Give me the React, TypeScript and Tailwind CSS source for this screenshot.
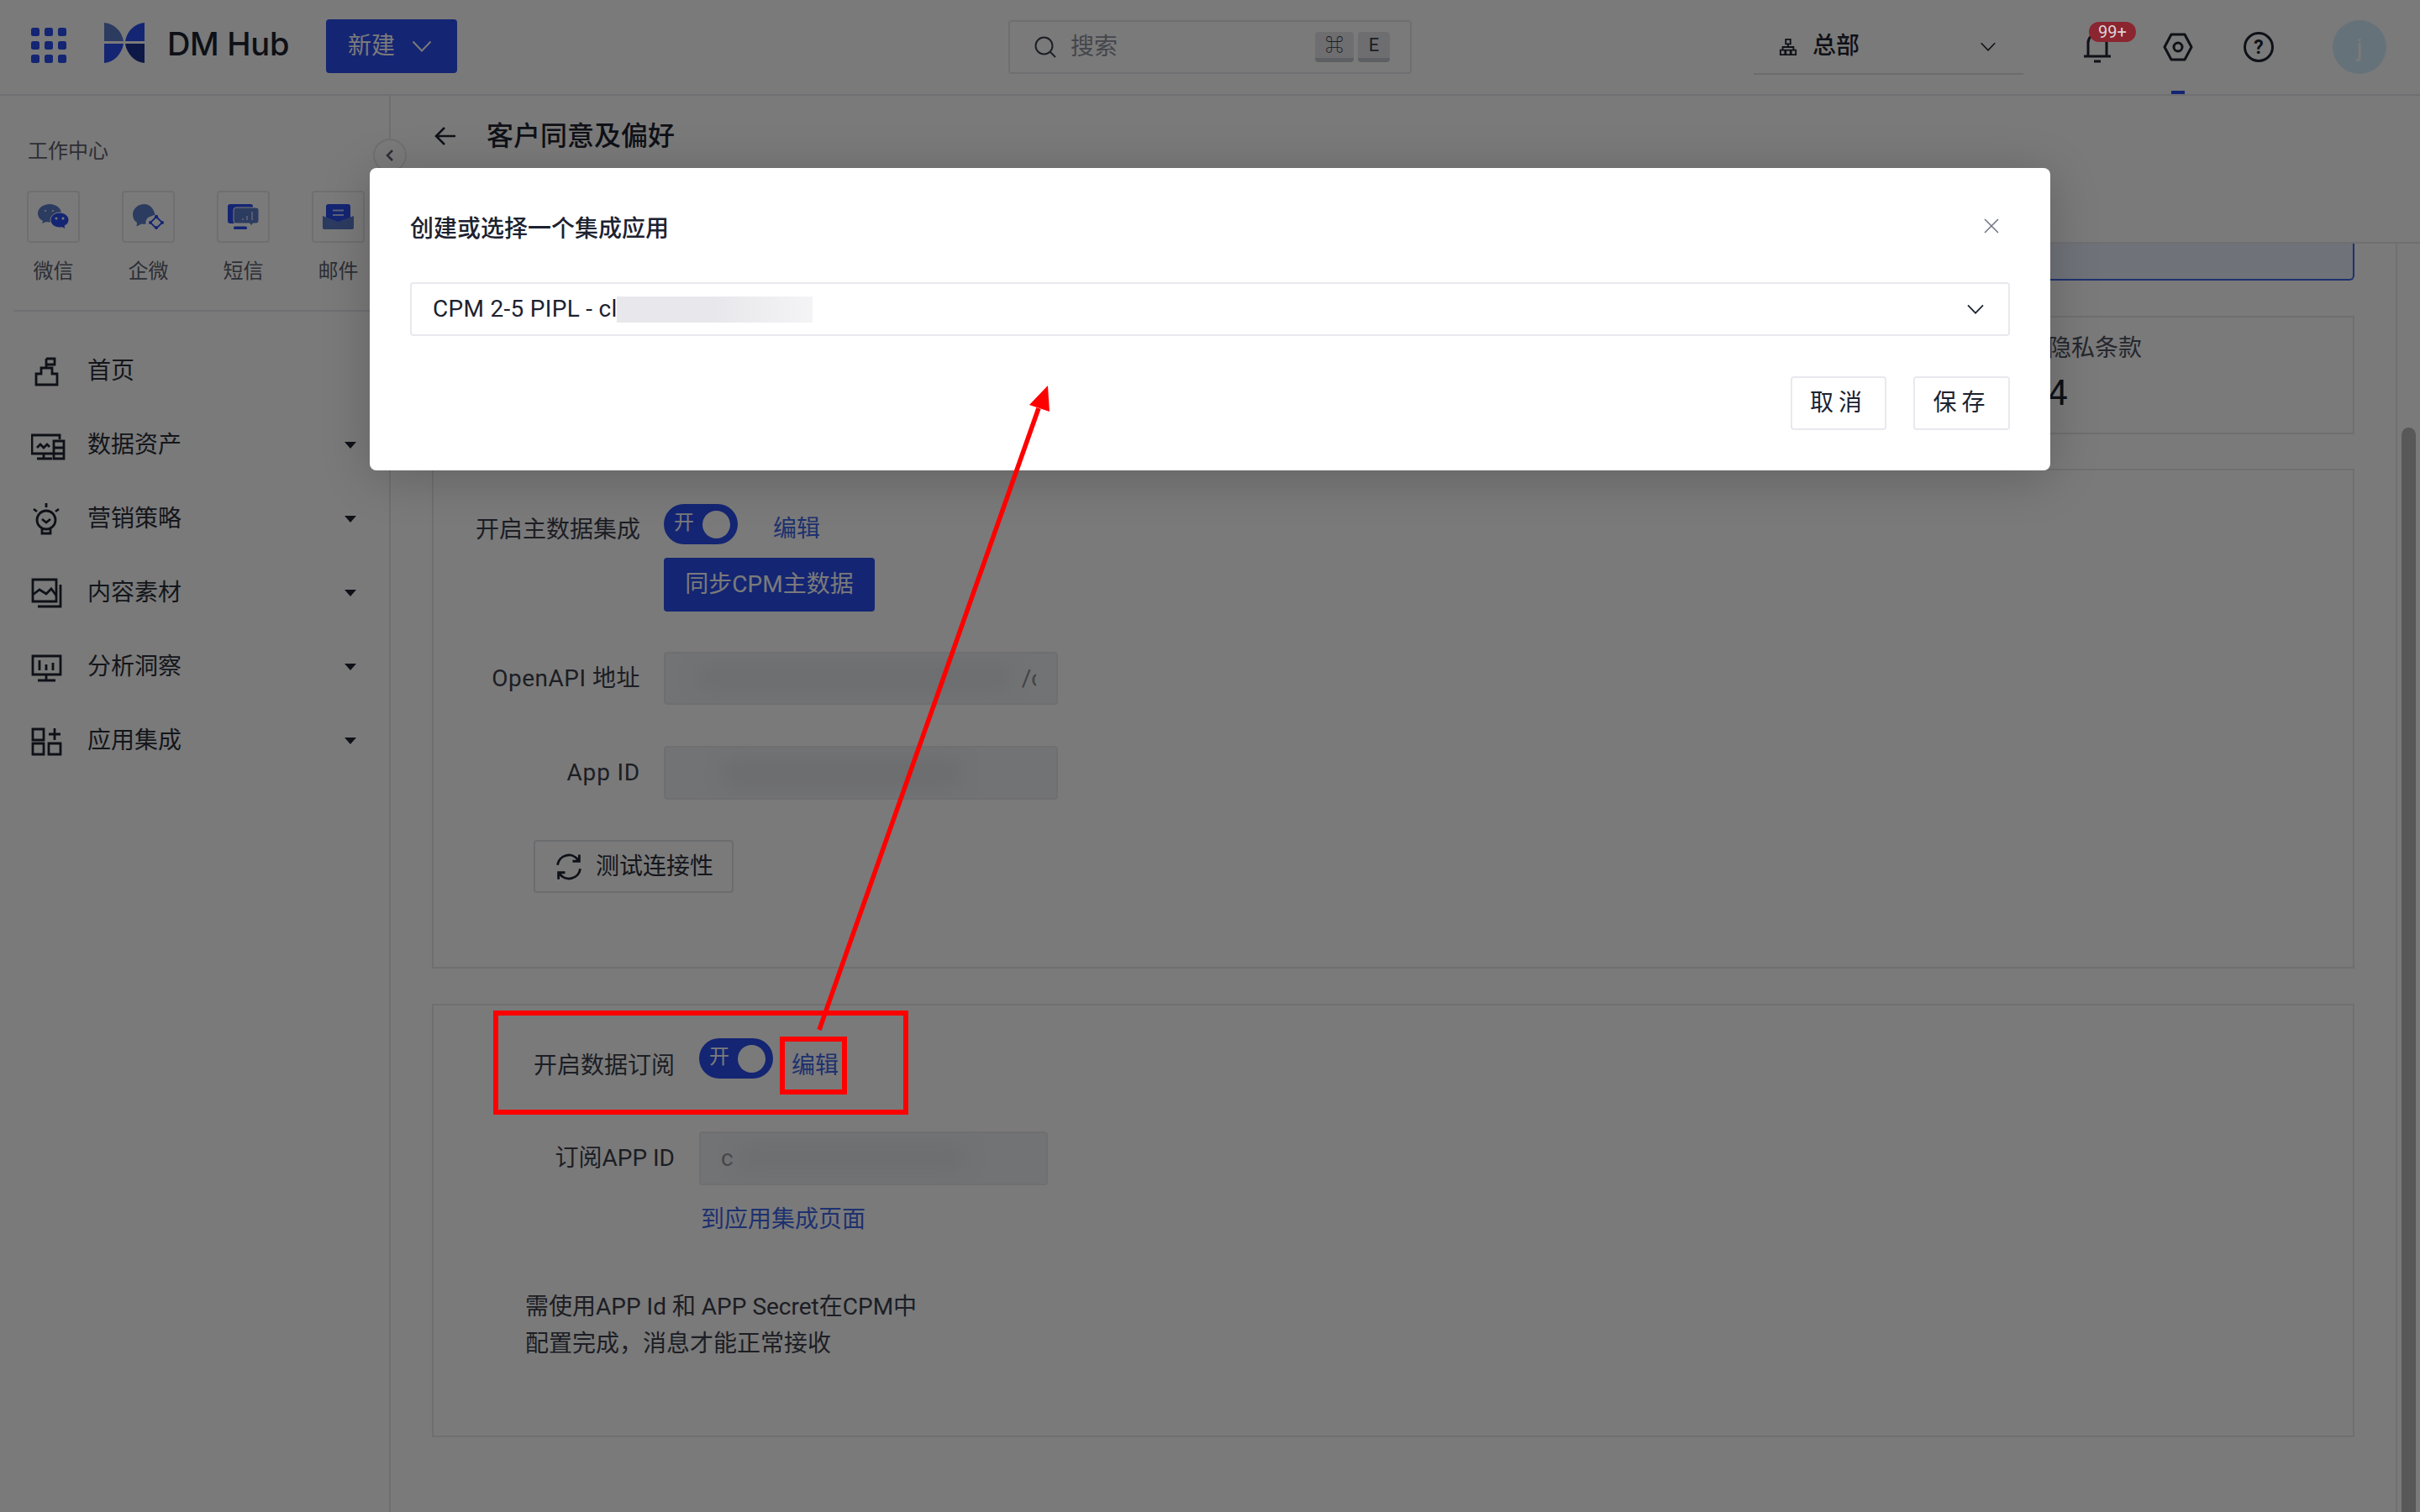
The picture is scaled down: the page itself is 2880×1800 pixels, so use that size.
import React from "react";

const font = "font-['Roboto','Noto_Sans_CJK_SC',sans-serif]";

function Chevron({ className = "" }: { className?: string }) {
  return (
    <svg viewBox="0 0 24 14" fill="none" stroke="currentColor" strokeWidth="2" className={className}>
      <path d="M1.5 1.5 12 12.5 22.5 1.5" />
    </svg>
  );
}

function Logo() {
  return (
    <svg viewBox="0 0 48 48" className="w-[48px] h-[48px]">
      <path d="M0 0C12 1 21 10 23 22H0Z" fill="#5c7cc8" />
      <path d="M48 0C36 1 27 10 25 22H48Z" fill="#2b4ef0" />
      <path d="M0 25H23C21 37 12 47 0 48Z" fill="#2b4ef0" />
      <path d="M48 25H25C27 37 36 47 48 48Z" fill="#1c3394" />
    </svg>
  );
}

function Grid() {
  return (
    <div className="grid grid-cols-3 gap-[6px] w-[42px]">
      {Array.from({ length: 9 }).map((_, i) => (
        <div key={i} className="h-[10px] rounded-[2.5px] bg-[#2b4ef0]" />
      ))}
    </div>
  );
}

const tileIcon = "w-[37px] h-[30px] overflow-visible";

function WeChat() {
  return (
    <svg viewBox="0 0 37 30" className={tileIcon}>
      <path d="M14 0C6 0 0 5 0 11c0 4 2 7 6 9l-1 3 5-2c1 .3 2 .4 4 .4 6 0 14-4 14-10.400C28 5 22 0 14 0Z" fill="#5c7cc8" />
      <path d="M26 10c-6 0-11 4-11 9s5 9 11 9c1 0 2 0 3-.3l4 2.300-1-4c3-2 5-4 5-7 0-5-5-9-11-9Z" fill="#2b4ef0" stroke="#fff" strokeWidth="1" />
      <circle cx="9" cy="8" r="1.300" fill="#fff" fillOpacity=".6" />
      <circle cx="18" cy="8" r="1.300" fill="#fff" fillOpacity=".6" />
      <circle cx="22" cy="17" r="1.500" fill="#fff" />
      <circle cx="30" cy="17" r="1.500" fill="#fff" />
    </svg>
  );
}

function WeCom() {
  return (
    <svg viewBox="0 0 37 30" className={tileIcon}>
      <path d="M14 0C6 0 0 5.500 0 12.500c0 4.500 2 7.500 5 9.500l-.5 4.500 6-3c1.500.4 3 .5 5 .3-.5-3 .5-6 3-8l8-3.300C25 5 20 0 14 0Z" fill="#5c7cc8" />
      <path d="M28 15l7 7-7 7-7-7Z" fill="none" stroke="#2b4ef0" strokeWidth="1.800" />
      <circle cx="28" cy="15" r="2.200" fill="#2b4ef0" />
      <circle cx="35" cy="22" r="2" fill="#2b4ef0" />
      <circle cx="28" cy="28" r="2" fill="#2b4ef0" />
      <circle cx="21" cy="22" r="2" fill="#2b4ef0" />
    </svg>
  );
}

function Sms() {
  return (
    <svg viewBox="0 0 37 30" className={tileIcon}>
      <path d="M3 0h24a3 3 0 0 1 3 3v20H3a3 3 0 0 1-3-3V3a3 3 0 0 1 3-3Z" fill="#2b4ef0" />
      <path d="M10 4h24a3 3 0 0 1 3 3v13a3 3 0 0 1-3 3h-4l-2 3-2-3H10a3 3 0 0 1-3-3V7a3 3 0 0 1 3-3Z" fill="#5c7cc8" stroke="#fff" strokeWidth="1" />
      <rect x="7" y="26.500" width="16" height="3.500" rx="1.500" fill="#2b4ef0" />
      <path d="M18 19v-2M23 19v-5M29 19V9" stroke="#fff" strokeOpacity=".7" strokeWidth="1.500" />
    </svg>
  );
}

function Mail() {
  return (
    <svg viewBox="0 0 37 30" className={tileIcon}>
      <path d="M7 0h23a3 3 0 0 1 3 3v14l-14.500 6L4 17V3a3 3 0 0 1 3-3Z" fill="#2b4ef0" />
      <path d="M12 7.500h13M12 13h13" stroke="#fff" strokeOpacity=".7" strokeWidth="1.800" />
      <path d="M0 14l18.500 7L37 14v14a2 2 0 0 1-2 2H2a2 2 0 0 1-2-2Z" fill="#5c7cc8" />
    </svg>
  );
}

const ic = "w-[44px] h-[44px] fill-none stroke-[#1f2430] stroke-[2.8]";

const navIcons: Record<string, React.ReactNode> = {
  首页: (
    <svg viewBox="0 0 44 44" className={ic}>
      <path d="M18 8h10v7H18M18 8v11h-6v7H6v13h25V26h-6v-7h-7" />
    </svg>
  ),
  数据资产: (
    <svg viewBox="0 0 44 44" className={ic}>
      <path d="M27 33H1V11h33v5" />
      <path d="M7 26l4-4 4 4 4-4 3 3M7 39h18M15 33v6" />
      <path d="M27 18h12v21H27zM27 26h12M27 33h12" />
    </svg>
  ),
  营销策略: (
    <svg viewBox="0 0 44 44" className={ic}>
      <circle cx="18" cy="24" r="11" />
      <path d="M18 4v5M3 11l4 3M33 11l-4 3M13 34v6h10v-6M13 23l5 4 5-4" />
    </svg>
  ),
  内容素材: (
    <svg viewBox="0 0 44 44" className={ic}>
      <path d="M2 7h28v26H2zM8 39h27V13" />
      <path d="M2 25l8-6 8 5 6-6 6 8" />
    </svg>
  ),
  分析洞察: (
    <svg viewBox="0 0 44 44" className={ic}>
      <path d="M2 10h33v22H2zM18 32v7M8 39h21M10 15v12M18 20v7M26 18v9" />
    </svg>
  ),
  应用集成: (
    <svg viewBox="0 0 44 44" className={ic}>
      <path d="M2 9h13v13H2zM2 26h13v13H2zM21 26h14v13H21zM21 15h14M28 8v14" />
    </svg>
  ),
};

function Toggle() {
  return (
    <div className="w-[88px] h-[48px] rounded-full bg-[#2b4ef0] flex items-center pl-[12px] pr-[9px] shrink-0">
      <span className="text-[24px] leading-[32px] text-white -mt-[4px]">开</span>
      <span className="ml-auto w-[33px] h-[33px] rounded-full bg-white" />
    </div>
  );
}

function Soft({ className }: { className: string }) {
  return <span className={"absolute blur-[12px] " + className} />;
}

export default function App() {
  const nav = ["首页", "数据资产", "营销策略", "内容素材", "分析洞察", "应用集成"];
  const tiles = [
    { n: "微信", i: <WeChat /> },
    { n: "企微", i: <WeCom /> },
    { n: "短信", i: <Sms /> },
    { n: "邮件", i: <Mail /> },
  ];
  return (
    <div className={"relative w-[2880px] h-[1800px] overflow-hidden bg-white text-[#1f2430] " + font}>
      {/* header */}
      <header className="h-[114px] border-b-2 border-[#e8e9ee] flex items-start relative">
        <div className="ml-[37px] mt-[33px]"><Grid /></div>
        <div className="ml-[45px] mt-[27px]"><Logo /></div>
        <div className="ml-[27px] mt-[27px] text-[38px] leading-[50px] font-medium font-['Inter',sans-serif] tracking-[-0.3px] text-[#1c2230]">DM Hub</div>
        <button className="absolute left-[388px] top-[23px] w-[156px] h-[64px] rounded-[4px] bg-[#2b4ef0] text-white flex items-center pl-[26px] text-[28px]">
          新建
          <Chevron className="w-[24px] h-[14px] ml-[20px]" />
        </button>
        <div className="absolute left-[1200px] top-[24px] w-[480px] h-[64px] border-2 border-[#e8e9ee] rounded-[4px] flex items-center pl-[28px]">
          <svg viewBox="0 0 28 28" className="w-[28px] h-[28px] fill-none stroke-[#3c4150] stroke-2">
            <circle cx="12.500" cy="12.500" r="10" /><path d="M20 20l6 6" />
          </svg>
          <span className="ml-[16px] text-[28px] text-[#8f92a0]">搜索</span>
          <span className="ml-auto flex gap-[5px] mr-[24px]">
            <span className="w-[46px] h-[36px] rounded-[4px] bg-[#e5e6ea] border-b-[5px] border-[#c4c6cd] flex items-center justify-center text-[22px] leading-none text-[#3c4150]">⌘</span>
            <span className="w-[38px] h-[36px] rounded-[4px] bg-[#e5e6ea] border-b-[5px] border-[#c4c6cd] flex items-center justify-center text-[22px] leading-none text-[#3c4150]">E</span>
          </span>
        </div>
        <div className="absolute left-[2087px] top-[24px] w-[321px] h-[65px] border-b-2 border-[#e0e1e6] flex items-center pl-[30px]">
          <svg viewBox="0 0 24 24" className="w-[22px] h-[22px] fill-none stroke-[#1f2430] stroke-2">
            <path d="M9 2h6v6H9zM2 16h6v6H2zM9 16h6v6H9zM16 16h6v6h-6zM12 8v4M5 16v-4h14v4" />
          </svg>
          <span className="ml-[18px] -mt-[2px] text-[28px] font-medium">总部</span>
          <Chevron className="w-[20px] h-[11px] ml-auto mr-[32px]" />
        </div>
        <svg viewBox="0 0 36 40" className="absolute left-[2478px] top-[36px] w-[36px] h-[40px] fill-none stroke-[#1f2430] stroke-[3]">
          <path d="M2 31h32M7 31V15a11 11 0 0 1 22 0v16M14 37h8" />
        </svg>
        <svg viewBox="0 0 36 34" className="absolute left-[2574px] top-[39px] w-[36px] h-[34px] fill-none stroke-[#1f2430] stroke-[3] [stroke-linejoin:round]">
          <path d="M10 2h16l8 15-8 15H10L2 17Z" /><circle cx="18" cy="17" r="5" />
        </svg>
        <div className="absolute left-[2584px] top-[108px] w-[16px] h-[4px] bg-[#2b4ef0]" />
        <div className="absolute left-[2670px] top-[38px] w-[36px] h-[36px] rounded-full border-[3px] border-[#1f2430] flex items-center justify-center text-[23px] font-bold leading-none">?</div>
        <div className="absolute left-[2776px] top-[24px] w-[64px] h-[64px] rounded-full bg-[#d5eeff] flex items-center justify-center text-[30px] text-white">j</div>
      </header>

      <div className="flex h-[1686px]">
        {/* sidebar */}
        <aside className="w-[465px] shrink-0 border-r-2 border-[#e8e9ee] relative">
          <div className="pl-[33px] pt-[50px] text-[24px] leading-[32px] text-[#5e6270]">工作中心</div>
          <div className="flex gap-[50px] ml-[32px] mt-[31px]">
            {tiles.map((t) => (
              <div key={t.n} className="w-[63px] flex flex-col items-center">
                <div className="w-[63px] h-[62px] border-2 border-[#e8e9ee] rounded-[4px] flex items-center justify-center">{t.i}</div>
                <div className="mt-[18px] text-[24px] leading-[32px] text-[#5e6270] whitespace-nowrap">{t.n}</div>
              </div>
            ))}
          </div>
          <div className="mx-[16px] mt-[30px] h-[2px] bg-[#e8e9ee]" />
          <nav className="mt-[26px]">
            {nav.map((n) => (
              <div key={n} className="h-[88px] flex items-center pl-[37px] pr-[39px]">
                <span className="w-[67px] shrink-0">{navIcons[n]}</span>
                <span className="mt-[2px] text-[28px] leading-[36px] text-[#2b2f3a]">{n}</span>
                {n !== "首页" && (
                  <svg viewBox="0 0 14 8" className="w-[14px] h-[8px] mt-[2px] ml-auto fill-[#1f2430]"><path d="M0 0h14L7 8Z" /></svg>
                )}
              </div>
            ))}
          </nav>
          <div className="absolute -right-[21px] top-[51px] w-[40px] h-[40px] rounded-full border-2 border-[#e8e9ee] bg-white flex items-center justify-center">
            <svg viewBox="0 0 10 16" className="w-[10px] h-[16px] fill-none stroke-[#5e6270] stroke-[2.5]"><path d="M8 2 2 8l6 6" /></svg>
          </div>
        </aside>

        {/* main */}
        <main className="flex-1 min-w-0 flex flex-col">
          <div className="h-[176px] shrink-0 border-b-2 border-[#e8e9ee] pl-[52px] pt-[30px] flex items-start">
            <svg viewBox="0 0 26 24" className="w-[26px] h-[24px] mt-[6px] fill-none stroke-[#1f2430] stroke-[2.5]"><path d="M25 12H2M12 2 2 12l10 10" /></svg>
            <span className="ml-[36px] text-[32px] leading-[36px] font-medium text-[#1f2430]">客户同意及偏好</span>
          </div>
          <div className="flex flex-1 min-h-0">
            <div className="flex-1 min-w-0 pl-[49px] pr-[49px]">
              <div className="h-[44px] border-2 border-t-0 border-[#3f67e8] rounded-b-[6px] bg-[#e8eefb]" />
              <div className="mt-[42px] h-[141px] border-2 border-[#e8e9ee] pl-[1921px] pt-[19px]">
                <div className="text-[28px] leading-[36px] text-[#4e5260]">隐私条款</div>
                <div className="text-[42px] leading-[50px] mt-[10px] text-[#1f2430]">4</div>
              </div>

              <section className="mt-[41px] h-[595px] border-2 border-[#e8e9ee] pt-[40px]">
                <div className="flex items-start">
                  <div className="w-[246px] mt-[13px] text-right text-[28px] leading-[36px] text-[#3c404c]">开启主数据集成</div>
                  <div className="ml-[28px]">
                    <div className="flex items-start">
                      <Toggle />
                      <a className="ml-[42px] mt-[12px] text-[28px] leading-[36px] text-[#3f67e8]">编辑</a>
                    </div>
                    <button className="mt-[16px] w-[251px] h-[64px] rounded-[4px] bg-[#2b4ef0] text-white text-[28px] leading-[36px]">同步CPM主数据</button>
                  </div>
                </div>
                <div className="flex items-center mt-[48px]">
                  <div className="w-[246px] text-right text-[28px] leading-[36px] tracking-[0.5px] text-[#3c404c]">OpenAPI 地址</div>
                  <div className="ml-[28px] relative w-[469px] h-[63px] rounded-[4px] bg-[#eef0f3] border-2 border-[#e8e9ee] overflow-hidden flex items-center justify-end pr-[15px] text-[28px] text-[#8a8d99]">
                    <Soft className="left-[40px] top-[14px] w-[370px] h-[30px] bg-[#e3e5e9]" />
                    <span className="relative">/c</span>
                    <span className="absolute right-[10px] top-[12px] w-[14px] h-[36px] bg-[#eef0f3]" />
                  </div>
                </div>
                <div className="flex items-center mt-[49px]">
                  <div className="w-[246px] text-right text-[28px] leading-[36px] tracking-[0.8px] text-[#3c404c]">App ID</div>
                  <div className="ml-[28px] relative w-[469px] h-[64px] rounded-[4px] bg-[#eef0f3] border-2 border-[#e8e9ee] overflow-hidden">
                    <Soft className="left-[70px] top-[16px] w-[280px] h-[30px] bg-[#e0e2e6]" />
                  </div>
                </div>
                <button className="ml-[119px] mt-[48px] w-[238px] h-[63px] rounded-[4px] border-2 border-[#e0e1e6] flex items-center pl-[22px] text-[28px] text-[#2b2f3a]">
                  <svg viewBox="0 0 32 32" className="w-[36px] h-[36px] fill-none stroke-[#1f2430] stroke-[2.5]">
                    <path d="M4 14A12 12 0 0 1 26 9M28 18A12 12 0 0 1 6 23M27 3v7h-7M5 29v-7h7" />
                  </svg>
                  <span className="ml-[14px]">测试连接性</span>
                </button>
              </section>

              <section className="mt-[42px] h-[516px] border-2 border-[#e8e9ee] pt-[39px]">
                <div className="flex items-start">
                  <div className="w-[287px] mt-[15px] text-right text-[28px] leading-[36px] text-[#3c404c]">开启数据订阅</div>
                  <div className="ml-[29px]"><Toggle /></div>
                  <a className="ml-[22px] mt-[15px] text-[28px] leading-[36px] text-[#3f67e8]">编辑</a>
                </div>
                <div className="flex items-center mt-[60px]">
                  <div className="w-[287px] text-right text-[28px] leading-[36px] text-[#3c404c]">订阅APP ID</div>
                  <div className="ml-[29px] relative w-[415px] h-[64px] rounded-[4px] bg-[#eef0f3] border-2 border-[#e8e9ee] overflow-hidden flex items-center pl-[24px] text-[28px] text-[#8a8d99]">
                    <span>c</span>
                    <Soft className="left-[44px] top-[14px] w-[270px] h-[32px] bg-[#e4e6ea]" />
                  </div>
                </div>
                <a className="block ml-[318px] mt-[23px] text-[28px] leading-[36px] text-[#3f67e8]">到应用集成页面</a>
                <div className="ml-[109px] mt-[64px] text-[28px] leading-[44px] text-[#3c404c]">
                  <div>需使用APP Id 和 APP Secret在CPM中</div>
                  <div>配置完成，消息才能正常接收</div>
                </div>
              </section>
            </div>
            <div className="w-[29px] shrink-0 border-l-2 border-[#e8e9ee] pl-[5px] pt-[219px]">
              <div className="w-[17px] h-[1400px] rounded-full bg-[#b8b8b8]" />
            </div>
          </div>
        </main>
      </div>

      {/* mask */}
      <div className="absolute inset-0 bg-black/[0.52]" />

      {/* notification badge, as bright as the reference shows it */}
      <span className="absolute left-[2486px] top-[26px] w-[56px] h-[24px] rounded-full bg-[#8b2530] text-[#dcd4d5] text-[20px] leading-[24px] text-center">99+</span>

      {/* modal */}
      <div className="absolute left-[440px] top-[200px] w-[2000px] h-[360px] bg-white rounded-[8px] shadow-[0_8px_60px_rgba(0,0,0,0.2)] px-[48px]">
        <div className="flex items-center h-[136px] pt-[9px]">
          <span className="text-[28px] leading-[36px] font-medium text-[#1c2230]">创建或选择一个集成应用</span>
          <svg viewBox="0 0 20 20" className="ml-auto mr-[12px] -mt-[7px] w-[20px] h-[20px] fill-none stroke-[#6e7280] stroke-[1.5]">
            <path d="M2 2l16 16M18 2 2 18" />
          </svg>
        </div>
        <div className="relative h-[64px] border-2 border-[#e8e9ee] rounded-[4px] flex items-center pl-[25px] pr-[28px] text-[28px] text-[#1c2230]">
          <span className="tracking-[0.3px]">CPM 2-5 PIPL - cl</span>
          <span className="absolute left-[244px] top-[15px] w-[233px] h-[31px] bg-gradient-to-r from-[#e8e8ec] via-[#e8e8ec] to-[#f4f4f6]" />
          <Chevron className="ml-auto w-[22px] h-[12px]" />
        </div>
        <div className="flex justify-end gap-[32px] mt-[48px]">
          <button className="w-[114px] h-[64px] border-2 border-[#e8e9ee] rounded-[4px] text-[28px] tracking-[6px] text-[#1c2230]">取消</button>
          <button className="w-[115px] h-[64px] border-2 border-[#e8e9ee] rounded-[4px] text-[28px] tracking-[6px] text-[#1c2230]">保存</button>
        </div>
      </div>

      {/* annotations */}
      <svg viewBox="0 0 2880 1800" className="absolute inset-0 w-[2880px] h-[1800px] pointer-events-none">
        <rect x="590" y="1206" width="488" height="118" fill="none" stroke="#ff0000" strokeWidth="6" />
        <rect x="931" y="1237" width="74" height="63" fill="none" stroke="#ff0000" strokeWidth="6" />
        <path d="M975 1226 1236 486" stroke="#ff0000" strokeWidth="5.500" fill="none" />
        <path d="M1247 459 1249 490 1225 482Z" fill="#ff0000" />
      </svg>
    </div>
  );
}
